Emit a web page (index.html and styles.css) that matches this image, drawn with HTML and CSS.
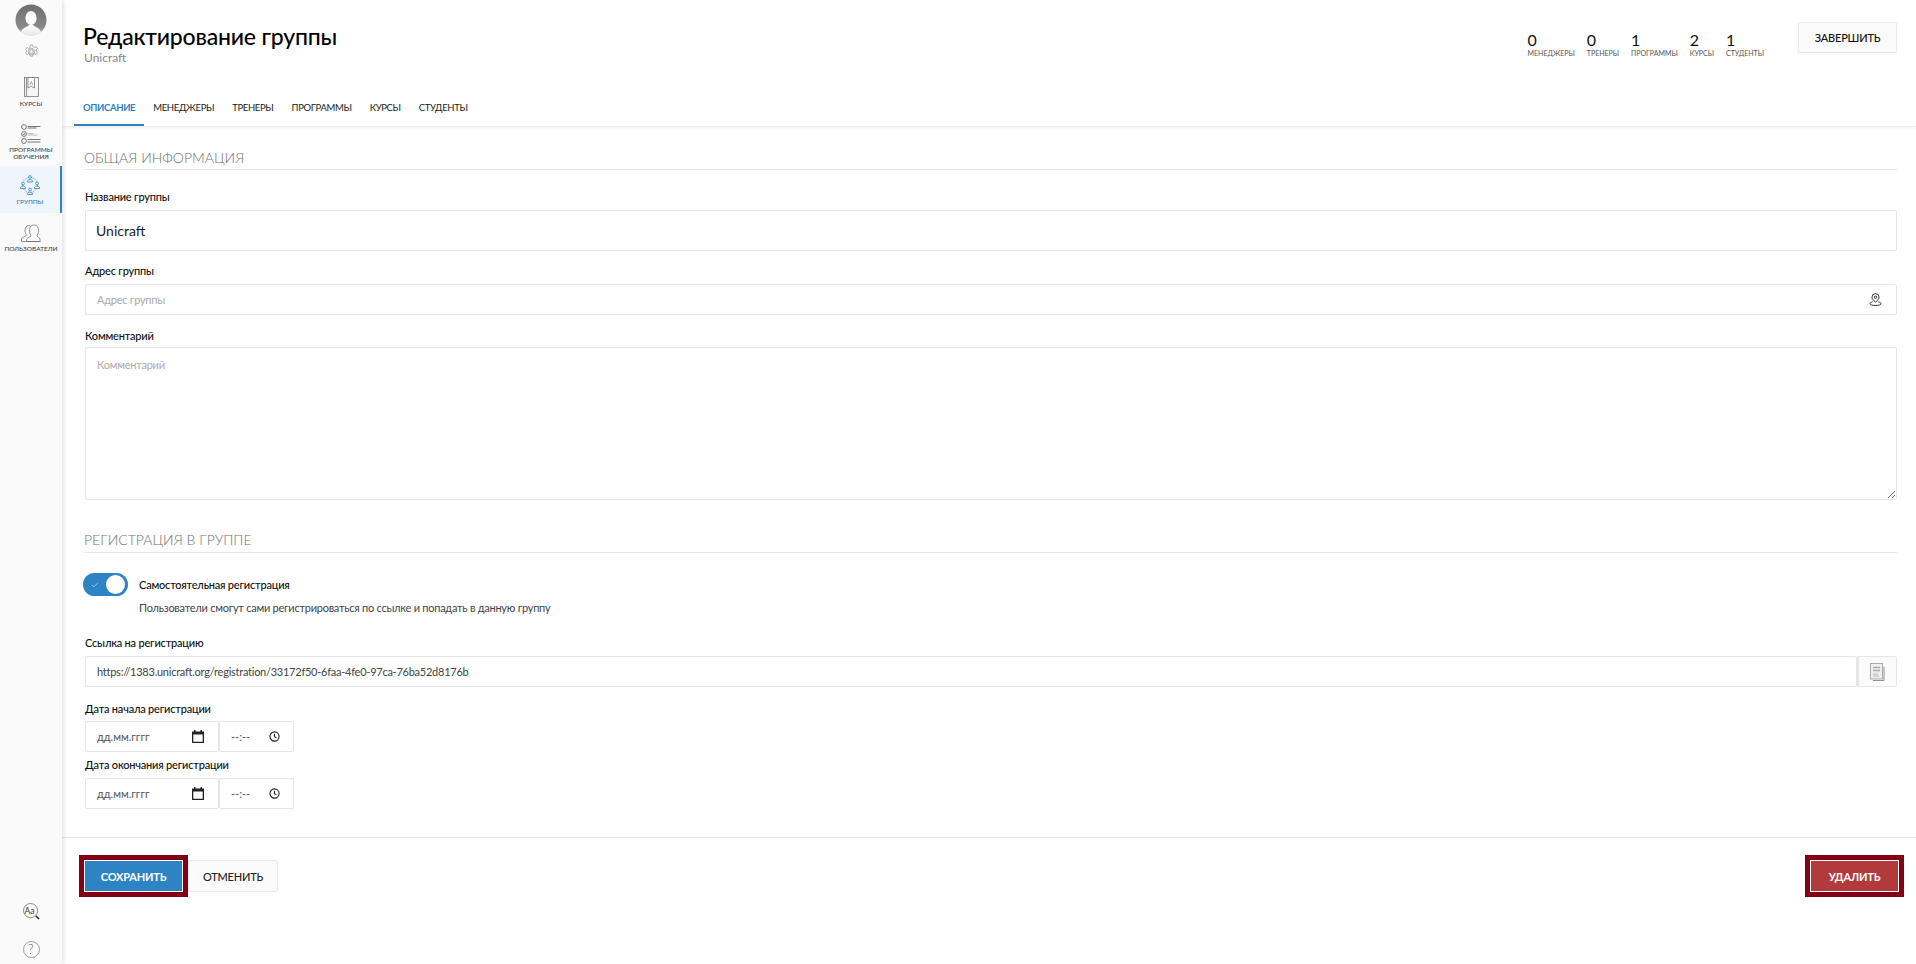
FILE: index.html
```html
<!DOCTYPE html>
<html lang="ru">
  <head>
    <meta charset="UTF-8" />
    <title>Редактирование группы</title>
    <link rel="stylesheet" href="styles.css">
  </head>
  <body>
    <aside class="sidebar">
      <div class="avatar">
        <svg viewBox="0 0 32 32" width="32" height="32">
          <defs>
            <linearGradient id="ava" x1="0" y1="0" x2="0" y2="1">
              <stop offset="0" stop-color="#6e6e6e" />
              <stop offset="0.75" stop-color="#8a8a8a" />
              <stop offset="1" stop-color="#c4c4c4" />
            </linearGradient>
            <linearGradient id="ava-body" x1="0" y1="0" x2="0" y2="1">
              <stop offset="0" stop-color="#fff" />
              <stop offset="1" stop-color="#e6e6e6" />
            </linearGradient>
          </defs>
          <circle cx="16" cy="16" r="15.5" fill="url(#ava)" />
          <ellipse cx="16" cy="14" rx="5.6" ry="7" fill="#fff" />
          <path d="M6 28c1-4 6-5 8-7h4c2 2 7 3 8 7a15.500 15.500 0 0 1-20 0z" fill="url(#ava-body)" />
        </svg>
      </div>
      <svg class="gear" viewBox="0 0 16 16" width="15" height="15" fill="none" stroke="#888" stroke-width="0.7">
        <path d="M6.700 1h2.600l.4 2 1.500.7 1.800-1 1.300 2.200-1.500 1.300v1.600l1.500 1.300-1.300 2.200-1.800-1-1.500.7-.4 2H6.700l-.4-2-1.500-.7-1.800 1-1.300-2.200 1.500-1.300V7.200L1.700 5.900 3 3.700l1.800 1 1.500-.7z" />
        <circle cx="8" cy="8" r="3.400" />
        <circle cx="8" cy="8" r="2" />
      </svg>
      <nav class="side-nav">
        <a class="side-item side-courses">
          <svg viewBox="0 0 15 20" width="15" height="20" fill="none" stroke="#777" stroke-width="0.8">
            <rect x="0.500" y="0.500" width="14" height="19" fill="#f6f6f6" />
            <path d="M2.500 .5v19" stroke="#999" stroke-width="1.200" />
            <path d="M4 .5h6.500v10.500l-3.200-1.800L4 11z" fill="#fff" />
            <path d="M5.800 8l1.500-3.500L8.800 8" stroke-width="0.6" />
          </svg>
          <span>Курсы</span>
        </a>
        <a class="side-item side-programs">
          <svg viewBox="0 0 20 20" width="20" height="20" fill="none" stroke="#555" stroke-width="0.8">
            <circle cx="3" cy="3" r="2.400" />
            <path d="M6.500 2.500h13M6.500 4h9" />
            <circle cx="3" cy="10" r="2.400" />
            <path d="M1.800 10l1 1 1.500-2" />
            <path d="M6.500 9.500h6M6.500 11h10" stroke="#aaa" />
            <circle cx="3" cy="17" r="2.400" />
            <path d="M6.500 15.500h13M6.500 18h13" />
          </svg>
          <span>Программы обучения</span>
        </a>
        <a class="side-item side-groups active">
          <svg viewBox="0 0 20 20" width="20" height="20" fill="none" stroke="#2e83c5" stroke-width="0.8">
            <circle cx="10" cy="10" r="7.500" stroke-dasharray="1.500 1" stroke-width="0.7" />
            <g fill="#eff5fa">
              <circle cx="10" cy="2" r="1.400" />
              <path d="M7.400 6.500c0-2.500 5.200-2.500 5.200 0v.5H7.400z" />
              <circle cx="3" cy="8.500" r="1.400" />
              <path d="M.4 13c0-2.500 5.200-2.500 5.200 0v.5H.4z" />
              <circle cx="17" cy="8.500" r="1.400" />
              <path d="M14.400 13c0-2.500 5.200-2.500 5.200 0v.5h-5.200z" />
              <circle cx="10" cy="14.500" r="1.400" />
              <path d="M7.400 19c0-2.500 5.200-2.500 5.200 0v.5H7.400z" />
            </g>
          </svg>
          <span>Группы</span>
        </a>
        <a class="side-item side-users">
          <svg viewBox="0 0 20 18" width="20" height="18" fill="none" stroke="#666" stroke-width="0.7">
            <path d="M.5 17.500v-2.500c0-1.500 4-2.500 5-3.500 0-1-1.500-2-1.500-5 0-3 1.500-5 3.500-5 1 0 1.500.5 2 1" />
            <path d="M5.500 17.500v-2c0-1.500 3.500-2.500 4.500-3.500 0-1-1.500-2-1.500-5.500 0-3.500 1.500-5.500 4.500-5.500s4.500 2 4.500 5.500c0 3.500-1.500 4.500-1.500 5.500 1 1 1.500 1.500 3 2.500v3z" fill="#fafafa" />
            <path d="M.5 17.500h19" />
          </svg>
          <span>Пользователи</span>
        </a>
      </nav>
      <div class="side-bottom">
        <svg viewBox="0 0 18 18" width="17" height="17" fill="none" stroke="#555" stroke-width="0.7">
          <circle cx="8" cy="8" r="7.500" />
          <path d="M13.500 13.500L17 17" stroke="#222" stroke-width="1.600" />
          <text x="1.500" y="11.500" class="lens-text">Aa</text>
        </svg>
        <svg viewBox="0 0 17 17" width="17" height="17" fill="none" stroke="#777" stroke-width="0.7">
          <circle cx="8.500" cy="8.500" r="8" />
          <text x="5" y="13" class="help-text">?</text>
        </svg>
      </div>
    </aside>

    <main class="page">
      <header class="topbar">
        <div class="topbar-row">
          <div>
            <h1>Редактирование группы</h1>
            <p class="subtitle">Unicraft</p>
          </div>
          <div class="topbar-right">
            <ul class="stats">
              <li><b>0</b><span>Менеджеры</span></li>
              <li><b>0</b><span>Тренеры</span></li>
              <li><b>1</b><span>Программы</span></li>
              <li><b>2</b><span>Курсы</span></li>
              <li><b>1</b><span>Студенты</span></li>
            </ul>
            <button class="btn btn-finish">Завершить</button>
          </div>
        </div>
        <nav class="tabs">
          <a class="tab active">Описание</a>
          <a class="tab">Менеджеры</a>
          <a class="tab">Тренеры</a>
          <a class="tab">Программы</a>
          <a class="tab">Курсы</a>
          <a class="tab">Студенты</a>
        </nav>
      </header>

      <section class="content">
        <h2 class="section-title">Общая информация</h2>
        <label class="field-label label-name">Название группы</label>
        <input class="input input-big" type="text" value="Unicraft" />
        <label class="field-label label-address">Адрес группы</label>
        <div class="with-icon">
          <input class="input" type="text" placeholder="Адрес группы" />
          <svg class="pin" viewBox="0 0 14 14" width="13" height="13" fill="none" stroke="#222" stroke-width="1">
            <path d="M7 10C5 8 3.200 6.500 3.200 4.500a3.800 3.800 0 0 1 7.600 0C10.800 6.500 9 8 7 10z" />
            <circle cx="7" cy="4.500" r="1.300" />
            <path d="M4 9.500c-2 .5-3 1.200-3 2 0 1 2.500 2 6 2s6-1 6-2c0-.8-1-1.500-3-2" />
          </svg>
        </div>
        <label class="field-label label-comment">Комментарий</label>
        <textarea class="input textarea" placeholder="Комментарий"></textarea>

        <h2 class="section-title section-reg">Регистрация в группе</h2>
        <div class="switch-row">
          <span class="switch">
            <svg viewBox="0 0 10 8" width="8" height="6" fill="none" stroke="#a9cfe9" stroke-width="1.200"><path d="M1 4l2.500 2.500L9 1" /></svg>
            <i class="knob"></i>
          </span>
          <div>
            <div class="switch-title">Самостоятельная регистрация</div>
            <div class="switch-text">Пользователи смогут сами регистрироваться по ссылке и попадать в данную группу</div>
          </div>
        </div>
        <label class="field-label label-link">Ссылка на регистрацию</label>
        <div class="link-row">
          <input class="input" type="text" value="https://1383.unicraft.org/registration/33172f50-6faa-4fe0-97ca-76ba52d8176b" />
          <button class="copy-btn">
            <svg viewBox="0 0 15 18" width="15" height="18" fill="none" stroke="#999" stroke-width="0.8">
              <path d="M14 3.500V17.500H3" stroke="#777" />
              <rect x="0.500" y="0.500" width="12" height="15.500" fill="#eee" />
              <path d="M3 4.500h7M3 7.500h7" stroke="#aaa" stroke-width="1.400" />
              <path d="M3 11h5M3 13h6" stroke="#aaa" />
            </svg>
          </button>
        </div>
        <label class="field-label label-date">Дата начала регистрации</label>
        <div class="date-row">
          <div class="input date">
            <span>дд.мм.гггг</span>
            <svg viewBox="0 0 12 13" width="12" height="13"><path d="M2 0h1.500v1.500h5V0H10v1.500h2V13H0V1.500h2zM1.300 4.500v7.200h9.400V4.500z" fill="#222" /></svg>
          </div>
          <div class="input time">
            <span>--:--</span>
            <svg viewBox="0 0 12 12" width="11" height="11" fill="none" stroke="#222" stroke-width="1.200"><circle cx="6" cy="6" r="5" /><path d="M6 3v3.200l2.200 1.300" /></svg>
          </div>
        </div>
        <label class="field-label label-date2">Дата окончания регистрации</label>
        <div class="date-row">
          <div class="input date">
            <span>дд.мм.гггг</span>
            <svg viewBox="0 0 12 13" width="12" height="13"><path d="M2 0h1.500v1.500h5V0H10v1.500h2V13H0V1.500h2zM1.300 4.500v7.200h9.400V4.500z" fill="#222" /></svg>
          </div>
          <div class="input time">
            <span>--:--</span>
            <svg viewBox="0 0 12 12" width="11" height="11" fill="none" stroke="#222" stroke-width="1.200"><circle cx="6" cy="6" r="5" /><path d="M6 3v3.200l2.200 1.300" /></svg>
          </div>
        </div>
      </section>

      <footer class="actions">
        <button class="btn btn-save">Сохранить</button>
        <button class="btn btn-cancel">Отменить</button>
        <button class="btn btn-delete">Удалить</button>
      </footer>
    </main>
  </body>
</html>
```

FILE: styles.css
```css
* {
  box-sizing: border-box;
}

html,
body {
  height: 100%;
}

body {
  margin: 0;
  display: flex;
  height: 964px;
  overflow: hidden;
  font-family: "Lato", "Open Sans", sans-serif;
  color: #111;
  background: #fff;
}

/* sidebar */
.sidebar {
  width: 62px;
  flex: none;
  display: flex;
  flex-direction: column;
  align-items: center;
  padding-top: 4px;
  background: #fafafa;
  box-shadow: 1px 0 5px rgba(0, 0, 0, 0.14);
  position: relative;
  z-index: 2;
}

.avatar {
  height: 32px;
}

.gear {
  margin-top: 8px;
}

.side-nav {
  width: 100%;
  margin-top: 18px;
  display: flex;
  flex-direction: column;
}

.side-item {
  display: flex;
  flex-direction: column;
  align-items: center;
  font-size: 6.500px;
  line-height: 7px;
  font-weight: 500;
  text-transform: uppercase;
  text-align: center;
  color: #444;
}

.side-courses {
  height: 47px;
}

.side-courses span {
  margin-top: 3px;
}

.side-programs {
  height: 42px;
}

.side-programs span {
  margin-top: 2px;
  padding: 0 2px;
}

.side-groups {
  height: 47px;
  padding-top: 9px;
}

.side-groups span {
  margin-top: 3px;
}

.side-users {
  margin-top: 11px;
}

.side-users span {
  margin-top: 3px;
}

.side-item.active {
  color: #2e83c5;
  background: #eff5fa;
  border-right: 2px solid #2e83c5;
}

.side-bottom {
  margin-top: auto;
  padding-bottom: 6px;
  display: flex;
  flex-direction: column;
  align-items: center;
  gap: 21px;
}

.lens-text {
  font-size: 9px;
  fill: #333;
  stroke: none;
}

.help-text {
  font-size: 13px;
  font-weight: 300;
  fill: #666;
  stroke: none;
}

/* page */
.page {
  flex: 1;
  min-width: 0;
  display: flex;
  flex-direction: column;
}

.topbar {
  height: 127px;
  padding: 0 19px 0 12px;
  border-bottom: 1px solid #eee;
  box-shadow: 0 1px 3px rgba(0, 0, 0, 0.06);
}

.topbar-row {
  height: 92px;
  padding: 22px 0 0 9px;
  display: flex;
  justify-content: space-between;
}

h1 {
  margin: 0;
  font-size: 23px;
  line-height: 28px;
  font-weight: 500;
  letter-spacing: -0.2px;
  color: #000;
}

.subtitle {
  margin: 0 0 0 1px;
  font-size: 12px;
  line-height: 15px;
  color: #888;
}

.topbar-right {
  display: flex;
  align-items: flex-start;
}

.stats {
  list-style: none;
  margin: 10px 34px 0 0;
  padding: 0;
  display: flex;
  gap: 12px;
}

.stats li {
  display: flex;
  flex-direction: column;
}

.stats b {
  font-size: 16px;
  line-height: 15px;
  font-weight: 400;
}

.stats span {
  margin-top: 1px;
  font-size: 7px;
  line-height: 10px;
  color: #555;
  text-transform: uppercase;
}

.btn {
  font-family: inherit;
  font-weight: 700;
  letter-spacing: -0.2px;
  text-transform: uppercase;
  cursor: pointer;
}

.btn-finish {
  width: 99px;
  height: 31px;
  font-size: 11px;
  font-weight: 500;
  color: #111;
  background: #fbfbfb;
  border: 1px solid #e8e8e8;
  border-radius: 2px;
}

.tabs {
  display: flex;
  height: 34px;
}

.tab {
  padding: 9px 9px 0;
  font-size: 9.500px;
  line-height: 14px;
  letter-spacing: -0.35px;
  color: #222;
  text-transform: uppercase;
}

.tab.active {
  color: #2e83c5;
  font-weight: 700;
  border-bottom: 2px solid #2e83c5;
}

/* form */
.content {
  flex: 1;
  padding: 22px 19px 0 22px;
  display: flex;
  flex-direction: column;
}

.section-title {
  margin: 0;
  height: 21px;
  font-size: 14px;
  line-height: 17px;
  font-weight: 300;
  color: #6f6f6f;
  text-transform: uppercase;
  border-bottom: 1px solid #e8e8e8;
}

.section-reg {
  margin-top: 31px;
  height: 22px;
}

.field-label {
  display: block;
  margin-left: 1px;
  font-size: 11px;
  line-height: 15px;
  font-weight: 500;
  letter-spacing: -0.2px;
  color: #111;
}

.label-name {
  margin-top: 19px;
  margin-bottom: 6px;
}

.label-address {
  margin-top: 12px;
  margin-bottom: 6px;
}

.label-comment {
  margin-top: 13px;
  margin-bottom: 4px;
}

.label-link {
  margin-top: 20px;
  margin-bottom: 6px;
}

.label-date {
  margin-top: 14px;
  margin-bottom: 5px;
}

.label-date2 {
  margin-top: 5px;
  margin-bottom: 6px;
}

.input {
  display: block;
  width: calc(100% - 1px);
  margin-left: 1px;
  height: 31px;
  padding: 0 11px;
  font-family: inherit;
  font-size: 11px;
  letter-spacing: -0.25px;
  color: #444;
  background: #fff;
  border: 1px solid #e6e6e6;
  border-radius: 2px;
  outline: none;
}

.input::placeholder {
  color: #aaa;
}

.input-big {
  height: 41px;
  padding: 0 10px;
  font-size: 14px;
  letter-spacing: 0;
  color: #222;
}

.with-icon {
  position: relative;
}

.pin {
  position: absolute;
  right: 15px;
  top: 9px;
}

.textarea {
  height: 153px;
  padding-top: 10px;
}

.switch-row {
  margin-top: 20px;
  display: flex;
  gap: 11px;
}

.switch {
  width: 45px;
  height: 23px;
  flex: none;
  margin-left: -1px;
  padding: 0 3px 0 8px;
  display: flex;
  align-items: center;
  justify-content: space-between;
  background: #2e83c5;
  border-radius: 12px;
}

.knob {
  width: 19px;
  height: 19px;
  background: #fff;
  border-radius: 50%;
}

.switch-title {
  margin-top: 4px;
  font-size: 11px;
  line-height: 15px;
  font-weight: 500;
  letter-spacing: -0.2px;
  color: #111;
}

.switch-text {
  margin-top: 8px;
  font-size: 11px;
  line-height: 15px;
  letter-spacing: -0.25px;
  color: #444;
}

.link-row {
  display: flex;
}

.link-row .input {
  flex: 1;
  width: auto;
}

.copy-btn {
  width: 40px;
  height: 31px;
  flex: none;
  padding: 0;
  display: flex;
  align-items: center;
  justify-content: center;
  background: #fbfbfb;
  border: 1px solid #e6e6e6;
  border-left-width: 2px;
  border-radius: 0 2px 2px 0;
}

.date-row {
  display: flex;
}

.date,
.time {
  display: flex;
  align-items: center;
  justify-content: space-between;
  color: #555;
  letter-spacing: 0;
}

.date {
  width: 134px;
  padding-right: 14px;
}

.time {
  width: 75px;
  margin-left: 0;
  padding-right: 13px;
}

/* bottom buttons */
.actions {
  height: 127px;
  padding: 22px 17px 0 22px;
  display: flex;
  align-items: flex-start;
  border-top: 1px solid #e8e8e8;
}

.actions .btn {
  height: 32px;
  font-size: 11px;
  border-radius: 0;
}

.btn-save {
  width: 99px;
  color: #fff;
  background: #2e83c5;
  border: 1px solid #fff;
  outline: 5px solid #820018;
}

.actions .btn-cancel {
  width: 90px;
  margin-left: 5px;
  color: #222;
  font-weight: 500;
  background: #fbfbfb;
  border: 1px solid #e8e8e8;
  border-radius: 2px;
}

.btn-delete {
  width: 89px;
  margin-left: auto;
  color: #fff;
  background: #b33a3c;
  border: 1px solid #fff;
  outline: 5px solid #820018;
}
```
